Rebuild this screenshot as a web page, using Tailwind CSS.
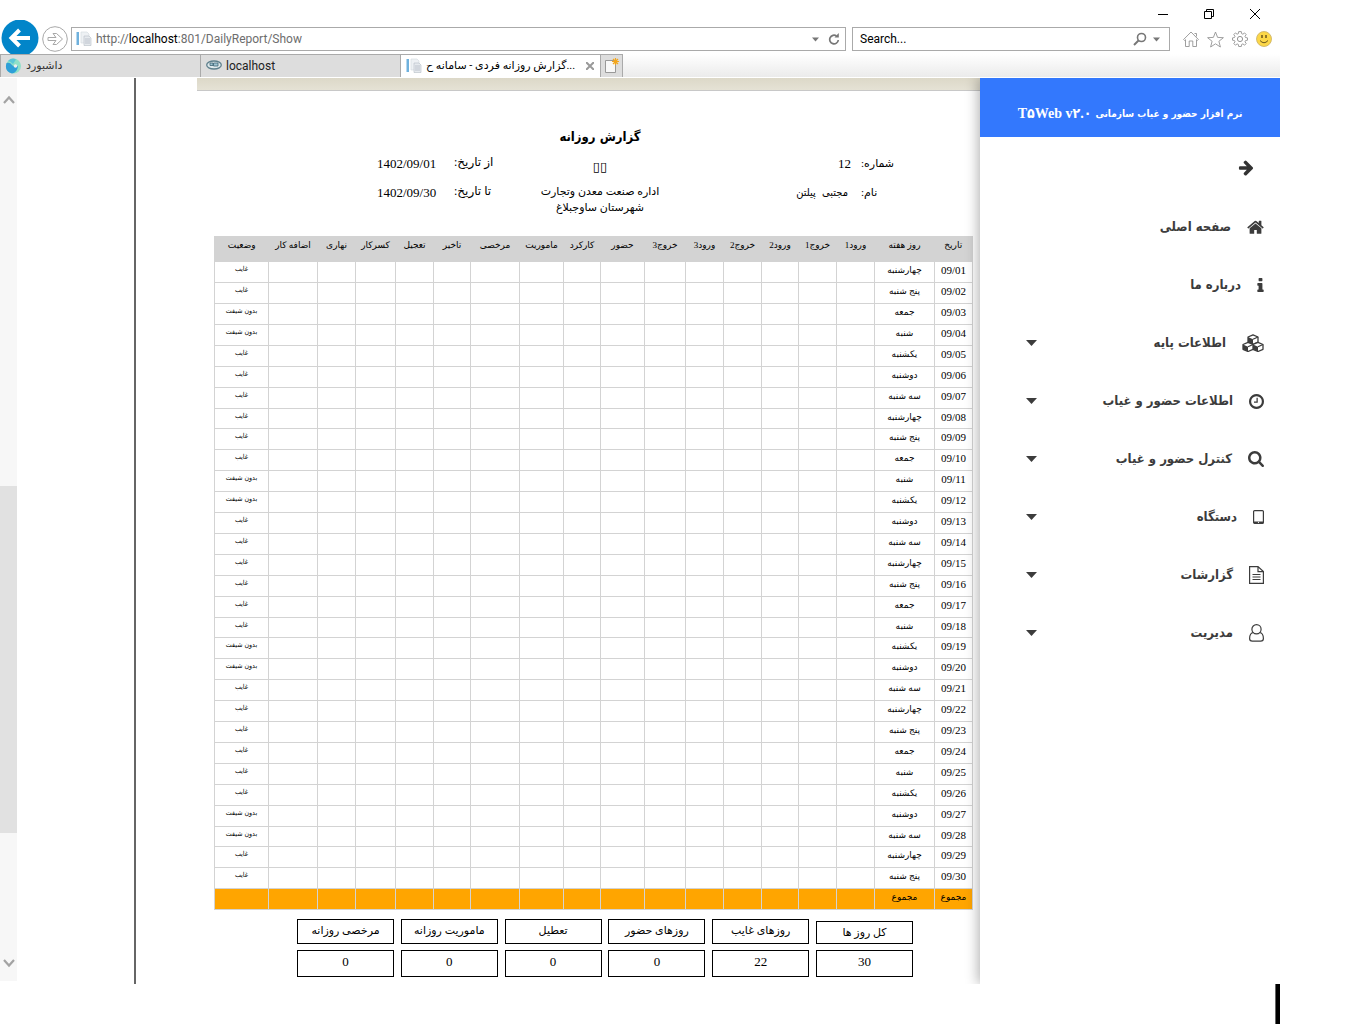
<!DOCTYPE html>
<html lang="fa">
<head>
<meta charset="utf-8">
<title>گزارش روزانه فردی - سامانه حضور و غیاب</title>
<script src="https://cdn.jsdelivr.net/npm/@tailwindcss/browser@4"></script>
</head>
<body class="bg-white pr-[86px] font-['Roboto','DejaVu_Sans',sans-serif] text-black">

<!-- Browser window controls -->
<div class="flex h-5 items-end justify-end gap-[30px] pr-[14px]">
  <button aria-label="Minimize" class="h-4 w-4"><svg class="h-4 w-4" viewBox="0 0 16 16"><path d="M0 10.500h10" stroke="#000" fill="none"/></svg></button>
  <button aria-label="Restore" class="h-4 w-4"><svg class="h-4 w-4" viewBox="0 0 16 16"><path d="M.5 7.500h7v7h-7zM2.500 7V5.500h7v7H8" stroke="#000" fill="none"/></svg></button>
  <button aria-label="Close" class="h-4 w-4"><svg class="h-4 w-4" viewBox="0 0 16 16"><path d="M0 5l10 10M10 5L0 15" stroke="#000" fill="none"/></svg></button>
</div>

<!-- Address and search -->
<header class="flex h-[34px] items-start pl-[1px] pr-2">
  <button aria-label="Back"><svg class="h-[34px] w-[38px]" viewBox="0 0 38 34"><circle cx="19" cy="18" r="18.500" fill="#0285c9"/><path d="M29 18H12M18.500 10L10.500 18l8 8" stroke="#fff" stroke-width="4" fill="none"/></svg></button>
  <div class="flex h-[38px] flex-1 items-center">
    <button aria-label="Forward" class="ml-[3px]"><svg class="h-[26px] w-[26px]" viewBox="0 0 26 26"><circle cx="13" cy="13" r="12.300" fill="#fff" stroke="#a8a8a8"/><path d="M6 11.500h8l-3-4h3.500l6 5.500-6 5.500H11l3-4H6z" fill="none" stroke="#a8a8a8"/></svg></button>
    <div class="ml-[3px] flex h-6 flex-1 items-center border border-[#aaa] pl-1 pr-[5px]">
      <svg class="h-4 w-4" viewBox="0 0 16 16"><path d="M.5 1H3v13H.5z" fill="#6fb1dd"/><path d="M5 1h6l2 2v9H5z" fill="#eef1f4" stroke="#d2d8de" stroke-width=".6"/><path d="M8 5h5l2 2v7.500H8z" fill="#e6eaee" stroke="#b5bdc6" stroke-width=".6"/><path d="M9 8h5M9 10h5M9 12h5" stroke="#aab3bd" stroke-width=".7"/></svg>
      <span role="textbox" aria-label="Address" dir="ltr" class="ml-1 flex-1 text-xs text-[#6d6d6d]">http://<span class="text-black">localhost</span>:801/DailyReport/Show</span>
      <button aria-label="Address history"><svg class="h-4 w-2" viewBox="0 0 8 16"><path d="M0 6.500h7L3.500 10.500z" fill="#777"/></svg></button>
      <button aria-label="Refresh" class="ml-2"><svg class="h-3 w-3" viewBox="0 0 12 12"><path d="M8.500 3A4.300 4.300 0 1 0 10.300 7" stroke="#777" stroke-width="1.700" fill="none"/><path d="M6.500 4.500h4.300V0z" fill="#777"/></svg></button>
    </div>
    <form class="ml-[6px] flex h-6 w-[318px] items-center border border-[#aaa] pl-[7px] pr-2">
      <input type="text" aria-label="Search" placeholder="Search..." class="min-w-0 flex-1 text-xs placeholder:text-black">
      <button type="button" aria-label="Run search"><svg class="h-[14px] w-[14px]" viewBox="0 0 14 14"><circle cx="8.500" cy="5.500" r="4" stroke="#777" stroke-width="1.600" fill="none"/><path d="M5.500 8.500L1 13" stroke="#777" stroke-width="2"/></svg></button>
      <button type="button" aria-label="Search providers" class="ml-[6px]"><svg class="h-4 w-2" viewBox="0 0 8 16"><path d="M0 6.500h7L3.500 10.500z" fill="#777"/></svg></button>
    </form>
    <div class="ml-[13px] flex items-center gap-2">
      <button aria-label="Home"><svg class="h-4 w-4" viewBox="0 0 16 16"><path d="M.6 8.500L8 1l7.400 7.500-1 1-.9-.8v6.800H9.800V10H6.200v5.500H2.500V8.700l-.9.8zM11.500 2.500h2v3" fill="none" stroke="#949494" stroke-width=".9"/></svg></button>
      <button aria-label="Favorites"><svg class="h-[17px] w-[17px]" viewBox="0 0 17 17"><path d="M8.500 1l2.100 5.400 5.800.3-4.500 3.600 1.500 5.700-4.900-3.200L3.600 16l1.500-5.700L.6 6.700l5.800-.3z" fill="none" stroke="#949494" stroke-width=".9"/></svg></button>
      <button aria-label="Tools"><svg class="h-4 w-4" viewBox="0 0 16 16"><path d="M6.700.6h2.600l.3 2 1.300.6 1.700-1.300 1.600 1.700-1.200 1.700.5 1.200 2 .4v2.300l-2 .4-.5 1.200 1.200 1.700-1.600 1.700-1.700-1.300-1.300.6-.3 2H6.700l-.3-2-1.300-.6-1.700 1.300-1.600-1.700L3 10.800l-.5-1.200-2-.4V6.900l2-.4L3 5.300 1.800 3.600l1.600-1.700 1.700 1.300 1.300-.6z" fill="none" stroke="#949494" stroke-width=".9"/><circle cx="8" cy="8" r="2.600" fill="none" stroke="#949494"/></svg></button>
      <button aria-label="Feedback"><svg class="h-4 w-4" viewBox="0 0 16 16"><circle cx="8" cy="8" r="7.500" fill="#fcd748" stroke="#c9b065" stroke-width=".8"/><path d="M6 4v3M10 4v3" stroke="#6b561c" stroke-width="1.500"/><path d="M4 9.500q4 4.500 8 0" stroke="#6b561c" fill="none"/></svg></button>
    </div>
  </div>
</header>

<!-- Tabs -->
<nav class="flex h-6 border-b border-white bg-linear-to-b from-white to-[#ebebeb] text-xs" aria-label="Tabs">
  <a href="#" class="flex w-[200px] items-center gap-1 border-l border-t border-[#aaa] bg-[#ddd] pl-1 text-[#333]">
    <svg class="h-4 w-[17px]" viewBox="0 0 17 16"><circle cx="8.500" cy="8" r="7.500" fill="#8fe0c8"/><path d="M1.500 5Q5 4 7 7t6 1q-1 7-6 7.400Q-1 13.500 1.500 5z" fill="#2d9fd8"/><path d="M3 3q4-4 8-1.500L8 6Q5 3 3 3z" fill="#5cc7d8"/><circle cx="10.500" cy="8" r="1.700" fill="#eee"/></svg>
    <span dir="rtl" class="text-[11px]">داشبورد</span>
  </a>
  <a href="#" class="flex w-[200px] items-center gap-1 border-l border-t border-[#aaa] bg-[#ddd] pl-[5px] text-[#222]">
    <svg class="h-4 w-4" viewBox="0 0 16 16"><ellipse cx="8" cy="7" rx="7.300" ry="4" fill="#dfe9ec" stroke="#5d7f8c" stroke-width="1.300"/><path d="M4 5h3v2.500H4zM7.500 5H12v3H7.500z" fill="#9fc4d2" stroke="#3f6675" stroke-width=".8"/></svg>
    <span>localhost</span>
  </a>
  <a href="#" aria-current="page" class="flex w-[200px] items-center gap-1 border-l border-t border-[#aaa] bg-white pl-[5px] pr-[6px]">
    <svg class="h-4 w-4" viewBox="0 0 16 16"><path d="M.5 1H3v13H.5z" fill="#6fb1dd"/><path d="M5 1h6l2 2v9H5z" fill="#eef1f4" stroke="#d2d8de" stroke-width=".6"/><path d="M8 5h5l2 2v7.500H8z" fill="#e6eaee" stroke="#b5bdc6" stroke-width=".6"/><path d="M9 8h5M9 10h5M9 12h5" stroke="#aab3bd" stroke-width=".7"/></svg>
    <span dir="ltr" class="flex-1 whitespace-nowrap text-[11px]">گزارش روزانه فردی - سامانه ح...</span>
    <svg class="h-2 w-2" viewBox="0 0 8 8"><path d="M0 0l8 8M8 0L0 8" stroke="#999" stroke-width="2"/></svg>
  </a>
  <button aria-label="New tab" class="flex w-[23px] items-center justify-center border-x border-t border-[#aaa] bg-[#ddd]">
    <svg class="h-4 w-4" viewBox="0 0 16 16"><path d="M1.500 2.500h10v12h-10z" fill="#f8f8f8" stroke="#999"/><path d="M11.500 0v7M8 3.500h7M9 1l5 5M14 1L9 6" stroke="#f3a61c" stroke-width="1.200"/></svg>
  </button>
</nav>

<div class="flex">
  <!-- Page scrollbar -->
  <div class="mb-[3px] flex w-[17px] flex-col items-center bg-[#f7f7f7] pt-4 pb-3">
    <svg class="h-3 w-3" viewBox="0 0 12 12"><path d="M1 9l5-5.500L11 9" stroke="#a3a3a3" stroke-width="2.200" fill="none"/></svg>
    <div class="w-full grow-[380]"></div>
    <div class="w-full grow-[347] bg-[#e1e1e1]"></div>
    <div class="w-full grow-[124]"></div>
    <svg class="h-3 w-3" viewBox="0 0 12 12"><path d="M1 3l5 5.500L11 3" stroke="#a3a3a3" stroke-width="2.200" fill="none"/></svg>
  </div>

  <!-- Report viewer -->
  <main class="ml-[117px] flex flex-1 justify-end border-l-2 border-[#666]">
    <div class="w-[783px] font-['Liberation_Serif','DejaVu_Sans',serif]">
      <div class="h-[13px] border-b border-[#c8c8c8] bg-linear-to-b from-[#dcd8c8] to-[#e5e2d5]"></div>

      <section class="flex h-[145px] pl-[180px] text-[13px] leading-[15px]">
        <dl class="mt-[65px] grid h-11 w-[120px] grid-cols-[77px_1fr] gap-y-[14px] whitespace-nowrap">
          <dt class="col-start-2 row-start-1 text-left text-xs leading-[13px]" dir="rtl">از تاریخ:</dt><dd class="col-start-1 row-start-1">1402/09/01</dd>
          <dt class="col-start-2 row-start-2 text-left text-xs leading-[13px]" dir="rtl">تا تاریخ:</dt><dd class="col-start-1 row-start-2">1402/09/30</dd>
        </dl>
        <div class="ml-[33px] mt-9 w-[140px] text-center" dir="rtl">
          <h1 class="font-['DejaVu_Sans_Condensed','DejaVu_Sans',sans-serif] text-[13px] font-bold leading-5">گزارش روزانه</h1>
          <p class="mt-3 leading-4">▯▯</p>
          <p class="mt-2 whitespace-nowrap text-[11px] leading-4">اداره صنعت معدن وتجارت<br>شهرستان ساوجبلاغ</p>
        </div>
        <dl class="ml-[117px] mt-[65px] grid h-11 w-[110px] grid-cols-[64px_1fr] gap-x-[10px] gap-y-[14px] whitespace-nowrap">
          <dt class="col-start-2 row-start-1 text-left text-[11px]" dir="rtl">شماره:</dt><dd class="col-start-1 row-start-1 text-right">12</dd>
          <dt class="col-start-2 row-start-2 text-left text-[11px]" dir="rtl">نام:</dt><dd class="col-start-1 row-start-2 pr-[3px] text-right font-['DejaVu_Sans_Condensed','DejaVu_Sans',sans-serif] text-[11px]" dir="rtl">مجتبی&nbsp; پیلتن</dd>
        </dl>
      </section>

      <table dir="rtl" class="ml-[17px] w-[759px] table-fixed border-collapse border border-[#d3d3d3] text-center text-[9px] leading-[14px]">
        <colgroup>
          <col class="w-[38px]"><col class="w-[60px]"><col class="w-[38px]"><col class="w-[38px]"><col class="w-[37px]"><col class="w-[38px]"><col class="w-[38px]"><col class="w-[41px]"><col class="w-[44px]"><col class="w-[37px]"><col class="w-[44px]"><col class="w-[49px]"><col class="w-[37px]"><col class="w-[38px]"><col class="w-[40px]"><col class="w-[38px]"><col class="w-[49px]"><col class="w-[54px]">
        </colgroup>
        <thead><tr id="head" class="h-[25px] bg-[#d3d3d3] align-top whitespace-nowrap"></tr></thead>
        <tbody id="days"></tbody>
        <tfoot><tr id="total" class="h-[21px] bg-[#ffa500] align-top"></tr></tfoot>
      </table>

      <section id="summary" class="ml-[100px] mt-[9px] flex h-[65px] w-[616px] justify-between text-center text-[13px]" dir="rtl"></section>
    </div>
  </main>

  <!-- Application menu -->
  <aside dir="rtl" class="z-10 w-[300px] bg-white font-['DejaVu_Sans_Condensed','DejaVu_Sans',sans-serif] text-[#3c3c3c] shadow-[-2px_0_12px_rgba(0,0,0,0.3)] [clip-path:inset(0_0_0_-20px)]">
    <h2 class="flex h-[59px] items-center justify-center gap-1 bg-[#3378fd] pt-3 text-[10px] font-bold whitespace-nowrap text-white"><span>نرم افزار حضور و غیاب سازمانی</span> <span dir="ltr" class="font-['Liberation_Serif','DejaVu_Sans_Condensed',serif] text-sm">T۵Web v۲.۰</span></h2>
    <div class="flex h-[61px] items-center pr-[26px]">
      <button aria-label="بستن منو"><svg class="h-4 w-4" viewBox="64 128 1600 1664"><path fill="#333" d="M1600 960q0 54-37 91l-651 651q-39 37-91 37-51 0-90-37l-75-75q-38-38-38-91t38-91l293-293h-704q-52 0-84.500-37.500t-32.500-90.500v-128q0-53 32.500-90.500t84.500-37.500h704l-293-294q-38-36-38-90t38-90l75-75q38-38 90-38 53 0 91 38l651 651q37 35 37 90z"/></svg></button>
    </div>
    <nav id="menu" class="text-[13px] font-bold" aria-label="منوی اصلی">
      <a href="#" class="flex h-[58px] items-center gap-4 pr-4"><svg class="h-[14px] w-[17px]" viewBox="64 192 1664 1344"><path fill="currentColor" d="M1472 992v480q0 26-19 45t-45 19h-384v-384h-256v384h-384q-26 0-45-19t-19-45v-480q0-1 .5-3t.5-3l575-474 575 474q1 2 1 6zm223-69l-62 74q-8 9-21 11h-3q-13 0-21-7l-692-577-692 577q-12 8-24 7-13-2-21-11l-62-74q-8-10-7-23.500t11-21.500l719-599q32-26 76-26t76 26l244 204v-195q0-14 9-23t23-9h192q14 0 23 9t9 23v408l219 182q10 8 11 21.500t-7 23.500z"/></svg><span>صفحه اصلی</span></a>
      <a href="#" class="flex h-[58px] items-center gap-4 pr-4"><svg class="h-[14px] w-[7px]" viewBox="576 128 640 1408"><path fill="currentColor" d="M1216 1344v128q0 26-19 45t-45 19h-512q-26 0-45-19t-19-45v-128q0-26 19-45t45-19h64v-384h-64q-26 0-45-19t-19-45v-128q0-26 19-45t45-19h384q26 0 45 19t19 45v576h64q26 0 45 19t19 45zm-128-1152v192q0 26-19 45t-45 19h-256q-26 0-45-19t-19-45v-192q0-26 19-45t45-19h256q26 0 45 19t19 45z"/></svg><span>درباره ما</span></a>
      <button class="flex h-[58px] w-full items-center gap-4 pr-4"><svg class="h-[18px] w-[22px]" viewBox="0 0 22 18"><g fill="#fff" stroke="currentColor" stroke-width="1.300" stroke-linejoin="round"><path d="M6 3l5-2.200L16 3v5l-5 2.300L6 8z"/><path d="M1 10.500l5-2.200 5 2.200v4.800l-5 2.200-5-2.200zM11 10.500l5-2.200 5 2.200v4.800l-5 2.200-5-2.200z"/></g><path d="M6 3l5 2.300v5L6 8zM1 10.500l5 2.300v4.700l-5-2.200zM11 10.500l5 2.300v4.700l-5-2.200z" fill="currentColor"/><path d="M11 5.300L16 3M6 12.800l5-2.300M16 12.800l5-2.300" stroke="currentColor" stroke-width="1.200"/></svg><span>اطلاعات پایه</span></button>
      <button class="flex h-[58px] w-full items-center gap-4 pr-4"><svg class="h-[15px] w-[15px]" viewBox="128 128 1536 1536"><path fill="currentColor" d="M1024 544v448q0 14-9 23t-23 9h-320q-14 0-23-9t-9-23v-64q0-14 9-23t23-9h224v-352q0-14 9-23t23-9h64q14 0 23 9t9 23zm416 352q0-148-73-273t-198-198-273-73-273 73-198 198-73 273 73 273 198 198 273 73 273-73 198-198 73-273zm224 0q0 209-103 385.500t-279.500 279.500-385.500 103-385.500-103-279.500-279.500-103-385.500 103-385.500 279.500-279.500 385.500-103 385.500 103 279.500 279.500 103 385.500z"/></svg><span>اطلاعات حضور و غیاب</span></button>
      <button class="flex h-[58px] w-full items-center gap-4 pr-4"><svg class="h-4 w-4" viewBox="64 128 1664 1664"><path fill="currentColor" d="M1216 832q0-185-131.500-316.500t-316.500-131.500-316.500 131.500-131.500 316.500 131.500 316.500 316.500 131.500 316.500-131.500 131.500-316.500zm512 832q0 52-38 90t-90 38q-54 0-90-38l-343-342q-179 124-399 124-143 0-273.500-55.500t-225-150-150-225-55.500-273.500 55.500-273.500 150-225 225-150 273.500-55.500 273.500 55.500 225 150 150 225 55.500 273.500q0 220-124 399l343 343q37 37 37 90z"/></svg><span>کنترل حضور و غیاب</span></button>
      <button class="flex h-[58px] w-full items-center gap-4 pr-4"><svg class="h-[14px] w-[11px]" viewBox="0 0 11 14"><rect x=".6" y=".6" width="9.800" height="12.800" rx="1" fill="none" stroke="currentColor" stroke-width="1.200"/><path d="M1 11.500h9v2H1z" fill="currentColor"/><circle cx="5.500" cy="12.300" r=".6" fill="#fff"/></svg><span>دستگاه</span></button>
      <button class="flex h-[58px] w-full items-center gap-4 pr-4"><svg class="h-[18px] w-[15px]" viewBox="0 0 15 18"><path d="M.6.6H9l5.400 5v11.800H.6zM9 .6v5h5.400M3.500 8.500h8M3.500 11h8M3.500 13.500h8" fill="none" stroke="currentColor" stroke-width="1.200"/></svg><span>گزارشات</span></button>
      <button class="flex h-[58px] w-full items-center gap-4 pr-4"><svg class="h-[18px] w-[15px]" viewBox="0 0 15 18"><path d="M4.500 8.500Q.6 9 .6 14.500q0 2.700 2.700 2.700h8.400q2.700 0 2.700-2.700 0-5.500-3.900-6" fill="none" stroke="currentColor" stroke-width="1.200"/><circle cx="7.500" cy="5.300" r="4.600" fill="none" stroke="currentColor" stroke-width="1.200"/></svg><span>مدیریت</span></button>
    </nav>
  </aside>
</div>

<div class="flex h-10 justify-end"><div class="w-[5px] border-l border-[#666] bg-black"></div></div>

<script>
  const heads = ['تاریخ','روز هفته','ورود1','خروج1','ورود2','خروج2','ورود3','خروج3','حضور','کارکرد','ماموریت','مرخصی','تاخیر','تعجیل','کسرکار','نهاری','اضافه کار','وضعیت'];
  const week = ['چهارشنبه','پنج شنبه','جمعه','شنبه','یکشنبه','دوشنبه','سه شنبه'];
  const noShift = [3, 4, 11, 12, 19, 20, 27, 28];
  const cell = 'border border-[#d3d3d3] p-0';
  document.getElementById('head').innerHTML = heads.map(h => `<th scope="col" class="p-0 pt-px font-normal">${h}</th>`).join('');

  let rows = '';
  for (let d = 1; d <= 30; d++) {
    const height = d % 10 === 8 ? 'h-5' : 'h-[21px]';
    rows += `<tr class="${height} align-top whitespace-nowrap"><td class="${cell} pt-px text-[11px]" dir="ltr">09/${String(d).padStart(2, '0')}</td><td class="${cell} pt-px">${week[(d - 1) % 7]}</td>`
      + `<td class="${cell}"></td>`.repeat(15)
      + `<td class="${cell} font-['DejaVu_Sans_Condensed','DejaVu_Sans',sans-serif] text-[7px]">${noShift.includes(d) ? 'بدون شیفت' : 'غایب'}</td></tr>`;
  }
  document.getElementById('days').innerHTML = rows;
  document.getElementById('total').innerHTML = `<td class="${cell} pt-px">مجموع</td>`.repeat(2) + `<td class="${cell}"></td>`.repeat(16);

  const sums = [['کل روز ها', 30], ['روزهای غایب', 22], ['روزهای حضور', 0], ['تعطیل', 0], ['ماموریت روزانه', 0], ['مرخصی روزانه', 0]];
  document.getElementById('summary').innerHTML = sums.map(([k, v], i) =>
    `<dl class="flex w-[97px] flex-col justify-between pb-[7px] ${i === 0 ? 'pt-[2px]' : ''}"><dt class="${i === 0 ? 'h-[23px]' : 'h-[25px]'} border border-black text-[11px] leading-5 whitespace-nowrap">${k}</dt><dd class="h-[27px] border border-black leading-[22px]">${v}</dd></dl>`).join('');

  document.querySelectorAll('#menu button').forEach(b => b.insertAdjacentHTML('beforeend',
    '<svg class="mr-auto ml-[46px] h-[6px] w-[11px]" viewBox="0 0 11 6"><path d="M0 0h11L5.500 6z" fill="currentColor"/></svg>'));
</script>
</body>
</html>
